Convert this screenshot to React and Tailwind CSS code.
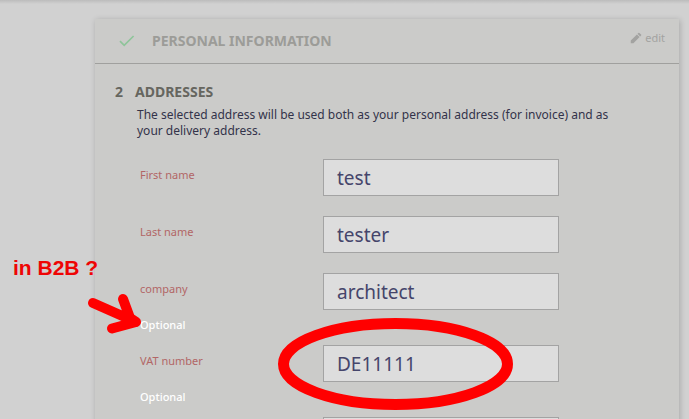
/**
 * Checkout page: address step, with the review notes drawn over it
 */

import { useState } from 'react';

const FIELDS = [
  { id: 'firstname', label: 'First name', value: 'test' },
  { id: 'lastname', label: 'Last name', value: 'tester' },
  { id: 'company', label: 'company', value: 'architect', optional: true },
  { id: 'vat', label: 'VAT number', value: 'DE11111', optional: true },
  { id: 'address', value: '' },
];

const CheckIcon = () => (
  <svg width="16" height="12" viewBox="0 0 16 12" fill="none" aria-hidden="true">
    <path d="M1 6.2 L5.2 10.4 L14.6 1" stroke="#8fc49a" strokeWidth="1.7" />
  </svg>
);

const PencilIcon = () => (
  <svg width="14" height="14" viewBox="0 0 24 24" fill="currentColor" aria-hidden="true">
    <path d="M3 16.4V21h4.6L18.2 10.4l-4.6-4.6L3 16.4zM20.7 7.9a1.2 1.2 0 0 0 0-1.700l-2.900-2.900a1.200 1.200 0 0 0-1.700 0l-1.600 1.600 4.600 4.600 1.600-1.600z" />
  </svg>
);

const Field = ({ id, label, value, optional }) => {
  const [text, setText] = useState(value);

  return (
    <div className="mb-5 flex items-start">
      <div className="w-[183px] shrink-0 pt-2 text-[11px] leading-4">
        {label && (
          <label htmlFor={id} className="block text-[#b26666]">
            {label}
          </label>
        )}
        {optional && <span className="-mb-2 block pt-5 font-medium text-white">Optional</span>}
      </div>
      <input
        id={id}
        type="text"
        aria-label={label ? undefined : id}
        value={text}
        onChange={(e) => setText(e.target.value)}
        className="h-[37px] min-w-0 flex-1 border border-[#a3a3a3] bg-[#dddddd] px-[13px] text-[19px] text-[#45456b] outline-none"
      />
    </div>
  );
};

/* Red marker notes lying over the page */
const Annotations = () => (
  <div className="pointer-events-none absolute inset-0">
    <p className="absolute left-[13px] top-[256px] font-['Liberation_Sans',sans-serif] text-[21px] font-bold leading-6 text-[#ee0505]">
      in B2B ?
    </p>
    <svg className="absolute left-0 top-0" width="600" height="419" fill="none" stroke="#ff0000" aria-hidden="true">
      <path d="M93 303 L136 322 M123 299 L130 318 L136 322 L112 328.5" strokeWidth="10" strokeLinecap="round" strokeLinejoin="round" />
      <ellipse cx="395.5" cy="364" rx="112" ry="40.5" strokeWidth="11" />
    </svg>
  </div>
);

const App = () => (
  <div className="relative h-screen overflow-hidden bg-[#d1d1d1] pl-[95px] pr-[10px] font-['Noto_Sans','Open_Sans',sans-serif]">
    <div className="absolute inset-x-0 top-0 h-1 bg-linear-to-b from-[#bcbcbc] to-[#d1d1d1]" />

    <main className="mt-[19px] bg-[#cbcbc9] shadow-[1px_1px_6px_rgba(0,0,0,0.2)]">
      <section className="flex h-[45px] items-center border-b border-[#a0a09e] pl-6 pr-[14px]">
        <CheckIcon />
        <h2 className="flex-1 pl-[17px] text-sm font-bold leading-5 text-[#9c9c98]">PERSONAL INFORMATION</h2>
        <button type="button" className="mb-1.5 flex items-center gap-[2px] text-[11px] leading-4 text-[#a3a3a1]">
          <PencilIcon />
          edit
        </button>
      </section>

      <section className="px-5 pt-[18px]">
        <h2 className="flex text-sm font-bold leading-5 text-[#66665f]">
          <span className="w-5">2</span>
          ADDRESSES
        </h2>
        <p className="max-w-[510px] pl-[22px] pt-[5px] text-xs leading-4 text-[#33334a]">
          The selected address will be used both as your personal address (for invoice) and as your delivery address.
        </p>
        <form className="w-full max-w-[444px] pl-[25px] pt-5">
          {FIELDS.map((field) => (
            <Field key={field.id} {...field} />
          ))}
        </form>
      </section>
    </main>

    <Annotations />
  </div>
);

export default App;
